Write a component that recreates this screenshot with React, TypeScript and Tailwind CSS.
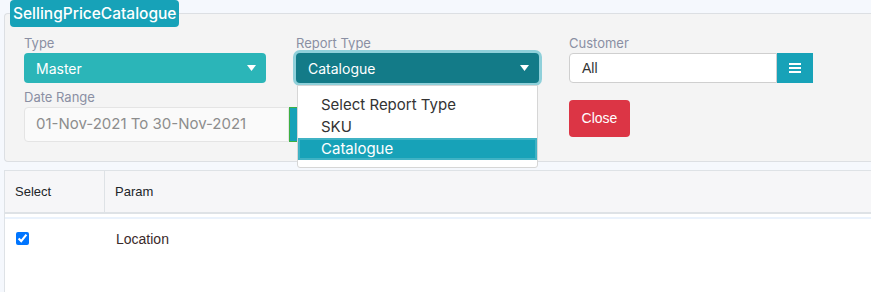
import React from "react";

const poppins = { fontFamily: "Inter, 'Noto Sans', sans-serif" };

function Caret() {
  return (
    <svg width="9" height="6" viewBox="0 0 9 6" className="shrink-0">
      <path d="M0 0h9L4.5 6z" fill="#ffffff" />
    </svg>
  );
}

function Label({ text }: { text: string }) {
  return <div className="h-[20px] text-[13px] leading-[20px] text-[#8a8fa3]">{text}</div>;
}

export default function App() {
  return (
    <div className="h-[292px] w-[881px] overflow-hidden bg-white" style={poppins}>
      <div className="w-[871px] bg-[#f5f8fd] pl-[4px] pt-[13px]">
        {/* filter panel */}
        <div className="relative h-[149px] rounded-tl-[4px] rounded-bl-[4px] border border-r-0 border-[#dcdfe3] bg-[#f4f4f4] pl-[19px] pt-[19px]">
          <div className="absolute left-[5px] top-[-14px] flex h-[27px] items-center rounded-[4px] bg-[#17a2b8] px-[3px] text-[15.5px] font-medium text-white">
            SellingPriceCatalogue
          </div>

          <div className="flex gap-x-[30px]">
            {/* column 1 */}
            <div className="flex w-[242px] flex-col">
              <Label text="Type" />
              <div className="flex h-[30px] items-center justify-between rounded-[4px] bg-[#2bb5b8] pl-[12px] pr-[10px] text-[14px] text-white">
                <span>Master</span>
                <Caret />
              </div>
              <div className="mt-[4px]">
                <Label text="Date Range" />
              </div>
              <div className="flex h-[35px] w-[301px]">
                <div className="flex w-[265px] items-center rounded-l-[4px] border border-[#e4e4e4] bg-[#fafafa] pl-[11px] text-[15px] text-[#8d8d8d]">
                  01-Nov-2021 To 30-Nov-2021
                </div>
                <div className="w-[36px] border border-[#3cb043] bg-[#17a2b8]" />
              </div>
            </div>

            {/* column 2 */}
            <div className="relative z-10 flex w-[243px] flex-col">
              <Label text="Report Type" />
              <div className="flex h-[30px] items-center justify-between rounded-[4px] bg-[#137b88] pl-[12px] pr-[10px] text-[14px] text-white ring-[3px] ring-[#8fd0da]">
                <span>Catalogue</span>
                <Caret />
              </div>
              <div className="absolute left-[1px] top-[52px] h-[83px] w-[241px] rounded-b-[3px] border border-[#d6d6d6] bg-white pt-[8px] text-[15px] leading-[22px] text-[#333]">
                <div className="pl-[23px]">Select Report Type</div>
                <div className="pl-[23px]">SKU</div>
                <div className="border-2 border-[#3fb2c4] bg-[#17a2b8] pl-[21px] leading-[18px] text-white">Catalogue</div>
              </div>
            </div>

            {/* column 3 */}
            <div className="flex w-[244px] flex-col">
              <Label text="Customer" />
              <div className="flex h-[30px]">
                <div className="flex flex-1 items-center rounded-l-[4px] border border-[#cfcfcf] bg-white pl-[12px] text-[14px] text-[#333]" style={{ fontFamily: "'Liberation Sans', Arial, sans-serif" }}>
                  All
                </div>
                <div className="flex w-[36px] flex-col items-center justify-center gap-[2px] bg-[#17a2b8]">
                  <span className="h-[2px] w-[12px] bg-white" />
                  <span className="h-[2px] w-[12px] bg-white" />
                  <span className="h-[2px] w-[12px] bg-white" />
                </div>
              </div>
              <button
                className="mt-[17px] flex h-[37px] w-[61px] items-center justify-center rounded-[4px] bg-[#dc3545] text-[14px] text-white"
                style={{ fontFamily: "'Liberation Sans', Arial, sans-serif" }}
              >
                Close
              </button>
            </div>
          </div>
        </div>

        {/* param table */}
        <div
          className="mt-[8px] h-[122px] border-l border-t border-[#dee2e6] bg-white text-[13px] text-[#212529]"
          style={{ fontFamily: "'Liberation Sans', Arial, sans-serif" }}
        >
          <div className="flex h-[43px] border-b-2 border-[#dee2e6] bg-[#f6f6f8]">
            <div className="flex w-[100px] items-center border-r border-[#dee2e6] pl-[10px]">Select</div>
            <div className="flex items-center pl-[10px]">Param</div>
          </div>
          <div className="mt-[3px] h-[2px] bg-[#eaf2fc]" />
          <div className="flex items-start pt-[12px]">
            <div className="w-[100px] pl-[11px]">
              <input type="checkbox" checked readOnly className="m-0 h-[13px] w-[13px] accent-[#0075ff]" />
            </div>
            <div className="pl-[11px] text-[14px] leading-[16px] text-[#3a2a2a]">Location</div>
          </div>
        </div>
      </div>
    </div>
  );
}
